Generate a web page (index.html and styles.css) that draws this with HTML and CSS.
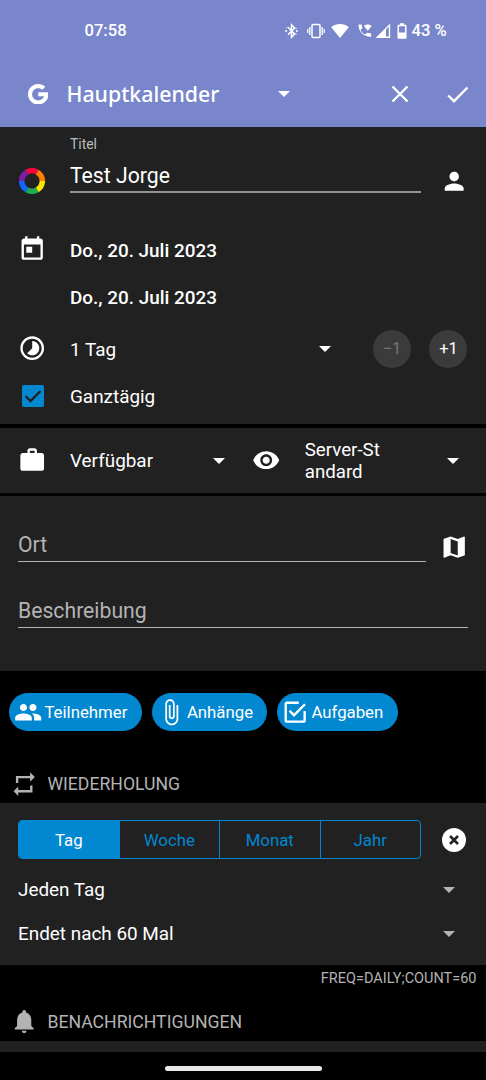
FILE: index.html
```html
<!DOCTYPE html>
<html lang="de">
<head>
<meta charset="utf-8">
<title>Hauptkalender</title>
<link rel="stylesheet" href="styles.css">
</head>
<body>
<div class="phone">
  <header class="header">
    <div class="status">
      <span class="clock">07:58</span>
      <svg class="st-bt" viewBox="0 0 13 16" width="13" height="16"><path d="M3 4.3 9.6 11 6.5 14.2V1.8L9.6 5 3 11.7" fill="none" stroke="#fff" stroke-width="1.5"/><circle cx="1.1" cy="8" r="1" fill="#fff"/><circle cx="11.9" cy="8" r="1" fill="#fff"/><circle cx="1.8" cy="4.6" r=".6" fill="#fff"/><circle cx="11" cy="5.3" r=".7" fill="#fff"/><circle cx="11" cy="10.7" r=".7" fill="#fff"/></svg>
      <svg class="st-vib" viewBox="0 0 18 16" width="18" height="16"><rect x="5" y="1.500" width="8" height="13" rx="1" fill="none" stroke="#fff" stroke-width="1.5"/><path d="M2.8 4v8M.8 6v4M15.2 4v8M17.2 6v4" stroke="#fff" stroke-width="1.300"/></svg>
      <svg class="st-wifi" viewBox="0 0 18 16" width="18" height="16"><path d="M.2 4.2C5.3-.2 12.7-.2 17.8 4.2L9 15z" fill="#fff"/></svg>
      <svg class="st-call" viewBox="0 0 14 16" width="14" height="16"><path d="M.5 1.500h3.100l.8 3.600-1.900 1.900c1 2.100 2.500 3.600 4.600 4.600l1.900-1.900 4.200.8v3.300C6 14.300.2 8.500.5 1.500z" fill="#fff"/><path d="M5.900 3c2.200-2 5.600-2 7.800 0L9.800 7.800z" fill="#fff"/></svg>
      <svg class="st-sig" viewBox="0 0 16 16" width="16" height="16"><path fill-rule="evenodd" d="M.5 15 15.2.5V15zM11 6.5v7.1h2.8V3.8z" fill="#fff"/></svg>
      <svg class="st-bat" viewBox="0 0 10 16" width="10" height="16"><path fill-rule="evenodd" d="M3 .3h4v1.5h1.6q.9 0 .9.9v12.100q0 .9-.9.9H1.400q-.9 0-.9-.9V2.700q0-.9.9-.9H3zM2 3.300V9.400h6V3.300z" fill="#fff"/></svg>
      <span class="pct">43 %</span>
    </div>
    <div class="toolbar">
      <svg class="logo" viewBox="4 4 40 40" width="20.5" height="20.5"><path fill="#fff" d="M43.611 20.083H24v8h11.303c-1.649 4.657-6.080 8-11.303 8-6.627 0-12-5.373-12-12s5.373-12 12-12c3.059 0 5.842 1.154 7.961 3.039l5.657-5.657C34.046 6.053 29.268 4 24 4 12.955 4 4 12.955 4 24s8.955 20 20 20 20-8.955 20-20c0-1.341-.138-2.650-.389-3.917z"/></svg>
      <h1>Hauptkalender</h1>
      <svg class="caret bar-caret" viewBox="0 0 12 6" width="12" height="6"><path d="M0 0h12L6 6z"/></svg>
      <svg class="close" viewBox="0 0 18 18" width="18" height="18"><path d="M1.500 1.500l15 15M16.500 1.500l-15 15"/></svg>
      <svg class="done" viewBox="0 0 22 17" width="22" height="17"><path d="M1.200 9.500l5.800 5.700L20.500 1.500"/></svg>
    </div>
  </header>

  <section class="card event">
    <div class="title-row">
      <svg class="wheel" viewBox="-13 -13 26 26" width="26" height="26" fill="none" stroke-width="5.500">
        <path stroke="#f9053b" d="M-5.150-8.920A10.300 10.300 0 0 1 5.150-8.920"/>
        <path stroke="#ff8000" d="M5.150-8.920A10.300 10.300 0 0 1 10.300 0"/>
        <path stroke="#ffe600" d="M10.300 0A10.300 10.300 0 0 1 5.150 8.920"/>
        <path stroke="#1cae50" d="M5.150 8.920A10.300 10.300 0 0 1-5.150 8.920"/>
        <path stroke="#1565ff" d="M-5.150 8.920A10.300 10.300 0 0 1-10.300 0"/>
        <path stroke="#7b1fa8" d="M-10.300 0A10.300 10.300 0 0 1-5.150-8.920"/>
      </svg>
      <div class="title-field"><label>Titel</label><div class="value">Test Jorge</div></div>
      <svg class="icon person" viewBox="0 0 24 24"><path d="M12 12c2.210 0 4-1.790 4-4s-1.790-4-4-4-4 1.790-4 4 1.790 4 4 4zm0 2c-2.670 0-8 1.340-8 4v2h16v-2c0-2.660-5.330-4-8-4z"/></svg>
    </div>
    <div class="row date">
      <svg class="icon" viewBox="0 0 24 24"><path d="M19 3h-1V1h-2v2H8V1H6v2H5c-1.110 0-1.990.9-1.990 2L3 19c0 1.100.89 2 2 2h14c1.100 0 2-.9 2-2V5c0-1.100-.9-2-2-2zm0 16H5V8h14v11zM7 10h5v5H7z"/></svg>
      <span>Do., 20. Juli 2023</span>
    </div>
    <div class="row date second"><span>Do., 20. Juli 2023</span></div>
    <div class="row duration">
      <svg class="icon" viewBox="0 0 24 24"><path d="M16.240 7.760C15.070 6.590 13.540 6 12 6v6l-4.240 4.240c2.340 2.340 6.140 2.340 8.490 0 2.340-2.340 2.340-6.140-.01-8.480zM12 2C6.480 2 2 6.480 2 12s4.480 10 10 10 10-4.480 10-10S17.520 2 12 2zm0 18c-4.420 0-8-3.580-8-8s3.580-8 8-8 8 3.580 8 8-3.580 8-8 8z"/></svg>
      <span class="grow">1 Tag</span>
      <svg class="caret dur-caret" viewBox="0 0 12 6" width="12" height="6"><path d="M0 0h12L6 6z"/></svg>
      <span class="round off">−1</span>
      <span class="round">+1</span>
    </div>
    <div class="row allday">
      <svg class="check" viewBox="0 0 22 22" width="22" height="22"><rect width="22" height="22" rx="2" fill="#0288d1"/><path d="M3.500 11l5 5L18.500 6" fill="none" stroke="#212121" stroke-width="2.300"/></svg>
      <span>Ganztägig</span>
    </div>
  </section>

  <section class="card access">
    <svg class="icon" viewBox="0 0 24 24"><path d="M20 6h-4V4c0-1.110-.89-2-2-2h-4c-1.110 0-2 .89-2 2v2H4c-1.110 0-1.990.89-1.990 2L2 19c0 1.110.89 2 2 2h16c1.110 0 2-.89 2-2V8c0-1.110-.89-2-2-2zm-6 0h-4V4h4v2z"/></svg>
    <span class="avail">Verfügbar</span>
    <svg class="caret" viewBox="0 0 12 6" width="12" height="6"><path d="M0 0h12L6 6z"/></svg>
    <svg class="icon eye" viewBox="0 0 24 24"><path d="M12 4.500C7 4.500 2.730 7.610 1 12c1.730 4.390 6 7.500 11 7.500s9.270-3.110 11-7.500c-1.730-4.390-6-7.500-11-7.500zM12 17c-2.760 0-5-2.240-5-5s2.240-5 5-5 5 2.240 5 5-2.240 5-5 5zm0-8c-1.660 0-3 1.340-3 3s1.340 3 3 3 3-1.340 3-3-1.340-3-3-3z"/></svg>
    <span class="privacy">Server-St<br>andard</span>
    <svg class="caret" viewBox="0 0 12 6" width="12" height="6"><path d="M0 0h12L6 6z"/></svg>
  </section>

  <section class="card details">
    <div class="place">
      <div class="input">Ort</div>
      <svg class="icon" viewBox="0 0 24 24"><path d="M20.500 3l-.16.030L15 5.100 9 3 3.360 4.900c-.21.070-.36.250-.36.480V20.500c0 .28.220.5.500.5l.16-.03L9 18.900l6 2.100 5.640-1.900c.21-.07.360-.25.360-.48V3.500c0-.28-.22-.5-.5-.5zM15 19l-6-2.110V5l6 2.110V19z"/></svg>
    </div>
    <div class="input">Beschreibung</div>
  </section>

  <div class="chips">
    <span class="chip people"><svg class="icon" viewBox="0 0 24 24"><path d="M16 11c1.660 0 2.990-1.340 2.990-3S17.660 5 16 5c-1.660 0-3 1.340-3 3s1.340 3 3 3zm-8 0c1.660 0 2.990-1.340 2.990-3S9.660 5 8 5C6.340 5 5 6.340 5 8s1.340 3 3 3zm0 2c-2.330 0-7 1.170-7 3.500V19h14v-2.500c0-2.330-4.670-3.500-7-3.500zm8 0c-.29 0-.62.020-.97.050 1.160.84 1.970 1.970 1.970 3.450V19h6v-2.500c0-2.330-4.670-3.500-7-3.500z"/></svg>Teilnehmer</span>
    <span class="chip files"><svg class="icon" viewBox="0 0 24 24"><path d="M16.500 6v11.500c0 2.210-1.790 4-4 4s-4-1.790-4-4V5c0-1.380 1.120-2.500 2.500-2.500s2.500 1.120 2.500 2.500v10.500c0 .55-.45 1-1 1s-1-.45-1-1V6H10v9.500c0 1.380 1.120 2.500 2.500 2.500s2.500-1.120 2.500-2.500V5c0-2.210-1.790-4-4-4S7 2.790 7 5v12.500c0 3.040 2.460 5.500 5.500 5.500s5.500-2.460 5.500-5.500V6h-1.500z"/></svg>Anhänge</span>
    <span class="chip tasks"><svg class="icon" viewBox="0 0 24 24"><path d="M19 19H5V5h10V3H5c-1.110 0-2 .9-2 2v14c0 1.100.89 2 2 2h14c1.110 0 2-.9 2-2v-8h-2v8zM7.910 10.080L6.500 11.500 11 16 21 6l-1.410-1.420L11 13.170l-3.090-3.090z"/></svg>Aufgaben</span>
  </div>

  <h2 class="heading"><svg class="icon" viewBox="0 0 24 24"><path d="M7 7h10v3l4-4-4-4v3H5v6h2V7zm10 10H7v-3l-4 4 4 4v-3h12v-6h-2v4z"/></svg>WIEDERHOLUNG</h2>

  <section class="card repeat">
    <div class="freq">
      <div class="segments"><span class="on">Tag</span><span>Woche</span><span>Monat</span><span>Jahr</span></div>
      <svg class="clear" viewBox="0 0 24 24" width="24" height="24"><circle cx="12" cy="12" r="12" fill="#fff"/><path d="M8 8l8 8M16 8l-8 8" stroke="#212121" stroke-width="2.500"/></svg>
    </div>
    <div class="select">Jeden Tag<svg class="caret" viewBox="0 0 12 6" width="12" height="6"><path d="M0 0h12L6 6z"/></svg></div>
    <div class="select">Endet nach 60 Mal<svg class="caret" viewBox="0 0 12 6" width="12" height="6"><path d="M0 0h12L6 6z"/></svg></div>
  </section>

  <div class="rule">FREQ=DAILY;COUNT=60</div>
  <h2 class="heading notify"><svg class="icon" viewBox="0 0 24 24"><path d="M12 22c1.100 0 2-.9 2-2h-4c0 1.100.89 2 2 2zm6-6v-5c0-3.070-1.640-5.640-4.500-6.320V4c0-.83-.67-1.500-1.500-1.500s-1.500.67-1.500 1.500v.68C7.630 5.360 6 7.920 6 11v5l-2 2v1h16v-1l-2-2z"/></svg>BENACHRICHTIGUNGEN</h2>
  <div class="card strip"></div>
  <footer class="nav"><div class="pill"></div></footer>
</div>
</body>
</html>
```
FILE: styles.css
```css
* { box-sizing: border-box; }

body {
  margin: 0;
  background: #000;
  color: #fff;
  font: 18.9px/22px Roboto, sans-serif;
}

svg { display: block; flex: none; }

.phone {
  display: flex;
  flex-direction: column;
  width: 486px;
  height: 1080px;
  overflow: hidden;
}

.phone > * { flex: none; }

.icon { width: 28.4px; height: 28.4px; fill: #fff; }
.caret { fill: #fff; }
.card { background: #212121; }

/* Header */
.header { height: 127px; background: #7986cb; }

.status {
  display: flex;
  align-items: center;
  height: 62px;
  padding-left: 84.5px;
  font-size: 16.6px;
  font-weight: 500;
}

.clock { width: 200.5px; }
.st-vib { margin-left: 9px; }
.st-wifi { margin-left: 6px; }
.st-call { margin-left: 9px; }
.st-sig { margin-left: 3px; }
.st-bat { margin-left: 6px; }
.pct { margin-left: 4.5px; }

.toolbar {
  display: flex;
  align-items: center;
  height: 64px;
  padding-left: 27.5px;
}

.toolbar h1 {
  width: 211px;
  margin: 0 0 0 18.5px;
  font: 500 21.3px/30px "Noto Sans", sans-serif;
}

.close { margin-left: 101.5px; }
.done { margin-left: 37.5px; }
.close path, .done path { fill: none; stroke: #fff; stroke-width: 2.4; }

/* Event */
.event { height: 297px; }

.title-row {
  display: flex;
  align-items: flex-start;
  height: 99px;
  padding-left: 19px;
}

.wheel { margin-top: 41px; }

.title-field {
  width: 351px;
  height: 66px;
  margin-left: 25px;
  padding-top: 6px;
  border-bottom: 2px solid #939393;
}

.title-field label { display: block; font-size: 13.9px; line-height: 22px; color: #bcbcbc; }
.value { padding-top: 7px; font-size: 21.2px; line-height: 28px; }
.person { margin: 40px 0 0 18.5px; }

.row {
  display: flex;
  align-items: center;
  height: 47px;
  padding-left: 18px;
}

.row > .icon { margin-right: 23.6px; }
.row > span:not(.round) { padding-top: 2px; }
.date { font-weight: 500; }
.second { padding-left: 70px; }
.duration { height: 56px; padding-top: 1px; }
.grow { width: 249.5px; }
.dur-caret { margin-right: 41.5px; }

.round {
  width: 38px;
  height: 38px;
  border-radius: 50%;
  background: #3b3b3b;
  font-size: 16.5px;
  line-height: 38px;
  text-align: center;
}

.round + .round { margin-left: 18.5px; }
.off { color: #777; }
.allday { height: 40px; }
.check { margin: 0 26.5px 0 3.5px; }

/* Availability and privacy */
.access {
  display: flex;
  align-items: center;
  height: 65px;
  margin-top: 4px;
  padding-left: 18px;
}

.avail { width: 143px; margin-left: 23.6px; }
.eye { margin-left: 27px; }
.privacy { width: 142.5px; margin-left: 24.4px; font-size: 18.7px; }

/* Location and description */
.details { height: 175px; margin-top: 3px; padding: 30px 18px 0; }
.place { display: flex; margin-bottom: 30px; }
.place .input { width: 408px; }
.place .icon { margin: 7px 0 0 13.7px; }

.input {
  height: 36px;
  border-bottom: 1.3px solid #b3b3b3;
  color: #b3b3b3;
  font-size: 21.2px;
  line-height: 37px;
}

/* Actions */
.chips { display: flex; gap: 9.5px; padding: 22px 0 0 9px; }

.chip {
  display: flex;
  align-items: center;
  height: 38px;
  border-radius: 19px;
  background: #0288d1;
  font-size: 16.8px;
}

.people { width: 133px; padding-left: 5px; }
.files { width: 115.5px; padding-left: 5px; }
.tasks { width: 121.5px; padding-left: 4.5px; }
.chip .icon { margin-right: 2px; }

.heading {
  display: flex;
  align-items: center;
  height: 38px;
  margin: 34px 0 0;
  padding-left: 9.5px;
  color: #b3b3b3;
  font-size: 17.65px;
  font-weight: 400;
}

.heading .icon { margin-right: 9.5px; fill: #b3b3b3; }

/* Repetition */
.repeat { height: 162px; padding: 17px 0 0 18px; }
.freq { display: flex; align-items: center; margin-bottom: 8.5px; }

.segments {
  display: flex;
  width: 403px;
  height: 39px;
  overflow: hidden;
  border: 1.3px solid #0288d1;
  border-radius: 4px;
  color: #0288d1;
  font-size: 16.8px;
  line-height: 38px;
  text-align: center;
}

.segments span { flex: 1; }
.segments span + span { border-left: 1px solid #0288d1; }
.segments .on { background: #0288d1; color: #fff; }
.clear { margin-left: 21px; }

.select { display: flex; align-items: center; justify-content: space-between; height: 44.5px; padding-right: 31px; }
.select .caret { fill: #b3b3b3; }

.rule {
  height: 28px;
  padding-right: 9.5px;
  color: #b3b3b3;
  font-size: 14.5px;
  line-height: 28px;
  text-align: right;
}

.notify { height: 40px; margin-top: 8px; padding-top: 1px; }
.strip { height: 11px; }
.nav { display: flex; justify-content: center; padding: 14px 0 0 1px; }
.pill { width: 157px; height: 5px; border-radius: 3px; background: #eaeaea; }
```
